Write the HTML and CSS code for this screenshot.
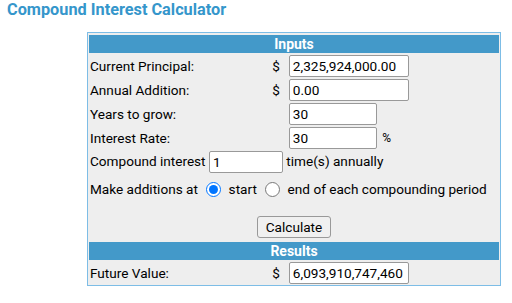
FILE: index.html
```html
<!DOCTYPE html>
<html lang="en">
<head>
  <meta charset="UTF-8" />
  <title>Compound Interest Calculator</title>
  <link rel="stylesheet" href="styles.css">
</head>
<body>
  <h1 class="title">Compound Interest Calculator</h1>
  <table class="calc">
    <tr><th colspan="4" class="head">Inputs</th></tr>
    <tr>
      <td class="label">Current Principal:</td>
      <td class="cur">$</td>
      <td colspan="2" class="in"><input class="field wide" type="text" value="2,325,924,000.00"></td>
    </tr>
    <tr>
      <td class="label">Annual Addition:</td>
      <td class="cur">$</td>
      <td colspan="2" class="in"><input class="field wide" type="text" value="0.00"></td>
    </tr>
    <tr>
      <td class="label">Years to grow:</td>
      <td class="cur"></td>
      <td colspan="2" class="in"><input class="field mid" type="text" value="30"></td>
    </tr>
    <tr>
      <td class="label">Interest Rate:</td>
      <td class="cur"></td>
      <td colspan="2" class="in"><input class="field mid" type="text" value="30"> <span class="pct">%</span></td>
    </tr>
    <tr>
      <td colspan="4" class="label">Compound interest <input class="field small" type="text" value="1"> time(s) annually</td>
    </tr>
    <tr>
      <td colspan="4" class="label radios">
        Make additions at
        <label><input type="radio" name="when" checked> start</label>
        <label><input type="radio" name="when"> end of each compounding period</label>
      </td>
    </tr>
    <tr>
      <td colspan="4" class="action"><button class="btn">Calculate</button></td>
    </tr>
    <tr><th colspan="4" class="head">Results</th></tr>
    <tr>
      <td class="label">Future Value:</td>
      <td class="cur">$</td>
      <td colspan="2" class="in"><input class="field wide" type="text" value="6,093,910,747,460"></td>
    </tr>
  </table>
</body>
</html>
```

FILE: styles.css
```css
body {
  margin: 0;
  padding: 0 7px;
  font-family: Roboto, "Liberation Sans", sans-serif;
  font-size: 13.6px;
  color: #000;
  background: #fff;
}

.title {
  margin: 0;
  height: 32px;
  line-height: 19px;
  font-size: 16.3px;
  font-weight: bold;
  color: #3596cb;
}

.calc {
  margin-left: 80px;
  width: 414px;
  border: 1px solid #7dbde6;
  border-spacing: 0;
  padding: 2px 1px 0;
  background: #eeeeee;
}

.calc td {
  padding: 0 1px;
  height: 24px;
  white-space: nowrap;
}

.head {
  background: #4399c9;
  color: #fff;
  font-size: 14px;
  font-weight: bold;
  height: 18px;
  padding: 0;
  line-height: 18px;
  border-bottom: 1px solid #eeeeee;
}

.label {
  text-align: left;
}

.calc .cur {
  width: 10px;
  text-align: right;
  padding-right: 2px;
}

.calc .in {
  padding-left: 7px;
}

.field {
  font-family: Roboto, "Liberation Sans", sans-serif;
  font-size: 13.6px;
  height: 22px;
  box-sizing: border-box;
  border: 1px solid #999;
  border-radius: 2px;
  padding: 0 3px;
  background: #fff;
  margin: 0;
  vertical-align: middle;
}

.wide {
  width: 120px;
}

.mid {
  width: 88px;
}

.small {
  width: 74px;
}

.pct {
  font-size: 12px;
  margin-left: 2px;
}

.calc .radios {
  height: 30px;
}

.radios input {
  margin: 0 4px 0 5px;
  width: 15px;
  height: 15px;
  vertical-align: -3px;
}

.calc .action {
  text-align: center;
  height: 38px;
  vertical-align: bottom;
}

.btn {
  font-family: Roboto, "Liberation Sans", sans-serif;
  font-size: 13.6px;
  height: 22px;
  margin: 0 0 4px 0;
  padding: 0 8px;
  border: 1px solid #999;
  border-radius: 3px;
  background: #f0f0f0;
  color: #000;
  vertical-align: bottom;
}
```
